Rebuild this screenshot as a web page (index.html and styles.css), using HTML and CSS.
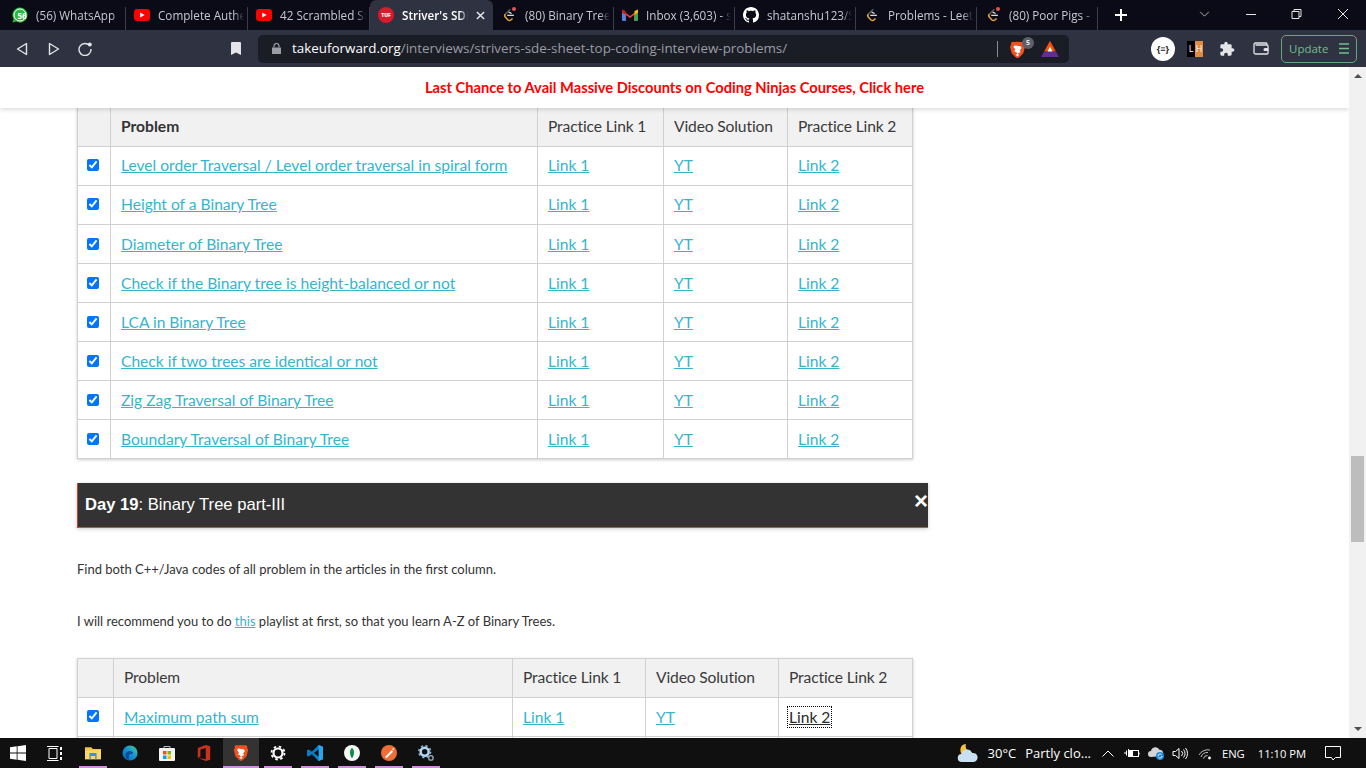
FILE: index.html
```html
<!DOCTYPE html>
<html lang="en">
<head>
<meta charset="utf-8">
<title>Striver's SDE Sheet</title>
<link rel="stylesheet" href="styles.css">
</head>
<body>
<svg class="defs" width="0" height="0" aria-hidden="true">
  <symbol id="yt" viewBox="0 0 16 12"><rect width="16" height="12" rx="3" fill="#f00"/><path d="M6.2 3.4 10.6 6l-4.4 2.6z" fill="#fff"/></symbol>
  <symbol id="lc" viewBox="0 0 18 18">
    <path d="M10.500 2.500 5 8" fill="none" stroke="#5a5a5a" stroke-width="1.700"/>
    <path d="M5 8a2.600 2.600 0 0 0 0 3.600l2.600 2.800a2.800 2.800 0 0 0 3.800 0l1.600-1.500" fill="none" stroke="#e8a33a" stroke-width="1.700"/>
    <path d="M7 9.400h7.500" stroke="#d8d8d8" stroke-width="1.500"/>
    <path d="M8.500 5.800l3.500 1.500" stroke="#e6e6e6" stroke-width="1.300"/>
  </symbol>
  <symbol id="dot" viewBox="0 0 4 4"><circle cx="2" cy="2" r="2" fill="#e5534b"/></symbol>
  <symbol id="brave" viewBox="0 0 18 20">
    <path d="M9 0 5 .5 3 0 1 2l.5 1.500L0 6l2 8 5 5 2 1 2-1 5-5 2-8-1.500-2.500L17 2l-2-2-2 .5z" fill="#f1511f"/>
    <path d="M9 5 5.500 4.500 4 6.500l2.500 3-1.500 2 3 1.500L9 15l1-1 3-1.500-1.500-2 2.500-3-1.500-2z" fill="#fff"/>
    <path d="M9 14.500 6.800 15.800 9 17.500l2.200-1.700z" fill="#fff"/>
  </symbol>
</svg>

<header class="tabstrip">
  <div class="tab first">
    <svg class="fav" viewBox="0 0 16 16"><path d="M8 .5a7.500 7.500 0 0 0-6.400 11.400L.5 15.500l3.700-1A7.500 7.500 0 1 0 8 .5z" fill="#2bb741"/><circle cx="8" cy="8" r="6" fill="#2bb741" stroke="#fff" stroke-width="1"/></svg>
    <span class="favcount">56</span>
    <span class="tabtitle">(56) WhatsApp</span>
  </div>
  <div class="tab"><svg class="fav yt"><use href="#yt"/></svg><span class="tabtitle">Complete Authentication</span></div>
  <div class="tab"><svg class="fav yt"><use href="#yt"/></svg><span class="tabtitle">42 Scrambled String</span></div>
  <div class="tab active">
    <span class="tuf">TUF</span>
    <span class="tabtitle">Striver's SDE Sheet</span>
    <svg class="tabclose" viewBox="0 0 10 10"><path d="M1 1l8 8M9 1 1 9" stroke="#e8e8ea" stroke-width="1.600"/></svg>
  </div>
  <div class="tab notched"><svg class="fav"><use href="#lc"/></svg><svg class="notedot"><use href="#dot"/></svg><span class="tabtitle">(80) Binary Tree Level</span></div>
  <div class="tab">
    <svg class="fav" viewBox="0 0 16 12"><path d="M1 12V2l7 5 7-5v10h-3V6L8 9 4 6v6z" fill="#ea4335"/><path d="M0 2.500V11a1 1 0 0 0 1 1h2.500V5.500z" fill="#4285f4"/><path d="M16 2.500V11a1 1 0 0 1-1 1h-2.500V5.500z" fill="#34a853"/><path d="M12.500 2 16 .5v3l-3.500 2.500z" fill="#fbbc04"/><path d="M0 .5v3L3.500 6V2z" fill="#c5221f"/></svg>
    <span class="tabtitle">Inbox (3,603) - shatanshu</span>
  </div>
  <div class="tab"><svg class="fav" viewBox="0 0 16 16"><path fill="#fff" d="M8 0C3.580 0 0 3.580 0 8c0 3.540 2.290 6.530 5.470 7.590.4.070.55-.17.55-.38 0-.19-.01-.82-.01-1.490-2.010.37-2.530-.49-2.690-.94-.09-.23-.48-.94-.82-1.130-.28-.15-.68-.52-.01-.53.63-.01 1.080.58 1.230.82.72 1.210 1.870.87 2.330.66.070-.52.28-.87.51-1.070-1.780-.2-3.640-.89-3.640-3.950 0-.87.31-1.590.82-2.150-.08-.2-.36-1.020.08-2.120 0 0 .67-.21 2.200.82.64-.18 1.320-.27 2-.27.68 0 1.360.09 2 .27 1.530-1.040 2.200-.82 2.200-.82.44 1.100.16 1.920.08 2.120.51.56.82 1.270.82 2.150 0 3.070-1.870 3.750-3.650 3.950.29.25.54.73.54 1.480 0 1.070-.01 1.930-.01 2.200 0 .21.15.46.55.38A8.013 8.013 0 0 0 16 8c0-4.420-3.580-8-8-8z"/></svg><span class="tabtitle">shatanshu123/Striver-SDE</span></div>
  <div class="tab"><svg class="fav"><use href="#lc"/></svg><span class="tabtitle">Problems - LeetCode</span></div>
  <div class="tab"><svg class="fav"><use href="#lc"/></svg><svg class="notedot"><use href="#dot"/></svg><span class="tabtitle">(80) Poor Pigs - LeetCode</span></div>
  <svg class="newtab" viewBox="0 0 12 12"><path d="M6 0v12M0 6h12" stroke="#fff" stroke-width="2"/></svg>
  <div class="wincontrols">
    <svg class="wc chev" viewBox="0 0 12 7"><path d="M1 1l5 5 5-5" fill="none" stroke="#c8c8cc" stroke-width="1"/></svg>
    <svg class="wc min" viewBox="0 0 10 1"><path d="M0 .5h10" stroke="#e6e6e6" stroke-width="1"/></svg>
    <svg class="wc max" viewBox="0 0 10 10"><path d="M.5 2.500h7v7h-7zM2.500 2.500v-2h7v7h-2" fill="none" stroke="#e6e6e6" stroke-width="1"/></svg>
    <svg class="wc cls" viewBox="0 0 10 10"><path d="M0 0l10 10M10 0 0 10" stroke="#e6e6e6" stroke-width="1"/></svg>
  </div>
</header>

<nav class="toolbar">
  <svg class="tool back" viewBox="0 0 12 14"><path d="M10.500 1.500v11L1.500 7z" fill="none" stroke="#e4e5e8" stroke-width="1.400" stroke-linejoin="round"/></svg>
  <svg class="tool fwd" viewBox="0 0 12 14"><path d="M1.500 1.500v11l9-5.500z" fill="none" stroke="#e4e5e8" stroke-width="1.400" stroke-linejoin="round"/></svg>
  <svg class="tool reload" viewBox="0 0 14 14"><path d="M11.500 3.500A6 6 0 1 0 13 7" fill="none" stroke="#e4e5e8" stroke-width="1.400"/><circle cx="11.800" cy="2.400" r="2" fill="#e4e5e8"/></svg>
  <svg class="tool bookmark" viewBox="0 0 10 13"><path d="M0 1a1 1 0 0 1 1-1h8a1 1 0 0 1 1 1v12L5 10.500 0 13z" fill="#e4e5e8"/></svg>
  <div class="urlbar">
    <svg class="lock" viewBox="0 0 9 11"><path d="M0 4.500h9V11H0z" fill="#9b9da5"/><path d="M2 4.500V3a2.500 2.500 0 0 1 5 0v1.500" fill="none" stroke="#9b9da5" stroke-width="1.200"/></svg>
    <span class="url"><span class="host">takeuforward.org</span>/interviews/strivers-sde-sheet-top-coding-interview-problems/</span>
    <span class="urlsep"></span>
    <span class="shield"><svg class="braveicon"><use href="#brave"/></svg><span class="shieldbadge">5</span></span>
    <svg class="bat" viewBox="0 0 18 16"><path d="M9 0l9 16H0z" fill="#662d91"/><path d="M9 0l5.500 10h-11z" fill="#ff5000"/><path d="M9 5.500l2.500 5h-5z" fill="#fff"/></svg>
  </div>
  <span class="ext-json">{≡}</span>
  <span class="ext-lh"><span class="lh-l">L</span><span class="lh-h">H</span></span>
  <svg class="puzzle" viewBox="0 0 24 24"><path fill="#e4e5e8" d="M20.500 11H19V7c0-1.100-.9-2-2-2h-4V3.500C13 2.120 11.880 1 10.500 1S8 2.120 8 3.500V5H4c-1.100 0-1.990.9-1.990 2v3.800H3.500c1.490 0 2.700 1.210 2.700 2.700s-1.210 2.700-2.700 2.700H2V20c0 1.100.9 2 2 2h3.800v-1.500c0-1.490 1.210-2.700 2.700-2.700 1.490 0 2.700 1.210 2.700 2.700V22H17c1.100 0 2-.9 2-2v-4h1.500c1.380 0 2.500-1.120 2.500-2.500S21.880 11 20.500 11z"/></svg>
  <svg class="wallet" viewBox="0 0 16 13"><path d="M14 3V2a1 1 0 0 0-1-1H2.500A1.500 1.500 0 0 0 1 2.500V10.500A1.500 1.500 0 0 0 2.500 12H14a1 1 0 0 0 1-1V4a1 1 0 0 0-1-1H2.500" fill="none" stroke="#e4e5e8" stroke-width="1.300"/><rect x="10.500" y="6" width="5" height="3" rx="1.500" fill="#e4e5e8"/></svg>
  <div class="update"><span>Update</span><svg class="menu" viewBox="0 0 10 11"><path d="M0 1h10M0 5.500h10M0 10h10" stroke="#6fbf8f" stroke-width="1.400"/></svg></div>
</nav>

<div class="viewport">
  <main class="page">
    <div class="banner">Last Chance to Avail Massive Discounts on Coding Ninjas Courses, Click here</div>
    <div class="content">
      <table class="sheet sheet-a">
        <thead>
          <tr><th class="c1"></th><th class="c2 strong">Problem</th><th class="c3">Practice Link 1</th><th class="c4">Video Solution</th><th class="c5">Practice Link 2</th></tr>
        </thead>
        <tbody>
          <tr><td><input type="checkbox" checked></td><td><a href="#">Level order Traversal / Level order traversal in spiral form</a></td><td><a href="#">Link 1</a></td><td><a href="#">YT</a></td><td><a href="#">Link 2</a></td></tr>
          <tr><td><input type="checkbox" checked></td><td><a href="#">Height of a Binary Tree</a></td><td><a href="#">Link 1</a></td><td><a href="#">YT</a></td><td><a href="#">Link 2</a></td></tr>
          <tr><td><input type="checkbox" checked></td><td><a href="#">Diameter of Binary Tree</a></td><td><a href="#">Link 1</a></td><td><a href="#">YT</a></td><td><a href="#">Link 2</a></td></tr>
          <tr><td><input type="checkbox" checked></td><td><a href="#">Check if the Binary tree is height-balanced or not</a></td><td><a href="#">Link 1</a></td><td><a href="#">YT</a></td><td><a href="#">Link 2</a></td></tr>
          <tr><td><input type="checkbox" checked></td><td><a href="#">LCA in Binary Tree</a></td><td><a href="#">Link 1</a></td><td><a href="#">YT</a></td><td><a href="#">Link 2</a></td></tr>
          <tr><td><input type="checkbox" checked></td><td><a href="#">Check if two trees are identical or not</a></td><td><a href="#">Link 1</a></td><td><a href="#">YT</a></td><td><a href="#">Link 2</a></td></tr>
          <tr><td><input type="checkbox" checked></td><td><a href="#">Zig Zag Traversal of Binary Tree</a></td><td><a href="#">Link 1</a></td><td><a href="#">YT</a></td><td><a href="#">Link 2</a></td></tr>
          <tr><td><input type="checkbox" checked></td><td><a href="#">Boundary Traversal of Binary Tree</a></td><td><a href="#">Link 1</a></td><td><a href="#">YT</a></td><td><a href="#">Link 2</a></td></tr>
        </tbody>
      </table>

      <div class="daybar"><span><b>Day 19</b>: Binary Tree part-III</span><span class="dayclose">×</span></div>

      <p class="note first-note">Find both C++/Java codes of all problem in the articles in the first column.</p>
      <p class="note">I will recommend you to do <a href="#">this</a> playlist at first, so that you learn A-Z of Binary Trees.</p>

      <table class="sheet sheet-b">
        <thead>
          <tr><th class="d1"></th><th class="d2">Problem</th><th class="d3">Practice Link 1</th><th class="d4">Video Solution</th><th class="d5">Practice Link 2</th></tr>
        </thead>
        <tbody>
          <tr><td><input type="checkbox" checked></td><td><a href="#">Maximum path sum</a></td><td><a href="#">Link 1</a></td><td><a href="#">YT</a></td><td><a href="#" class="focused">Link 2</a></td></tr>
          <tr><td></td><td></td><td></td><td></td><td></td></tr>
        </tbody>
      </table>
    </div>
  </main>
  <aside class="scrollbar">
    <span class="arrow up"></span>
    <span class="thumb"></span>
    <span class="arrow down"></span>
  </aside>
</div>

<footer class="taskbar">
  <svg class="win" viewBox="0 0 16 16"><path d="M0 2.300 6.700 1.300v6.300H0zM7.500 1.200 16 0v7.600H7.500zM0 8.400h6.700v6.300L0 13.700zM7.500 8.400H16V16l-8.500-1.200z" fill="#fff"/></svg>
  <svg class="taskview" viewBox="0 0 17 15"><path d="M3 2.500h8v10H3zM1 .5h11.500M1 14.500h11.500" fill="none" stroke="#fff" stroke-width="1"/><path d="M14 1h2v3h-2zM14 6h2v3h-2zM14 11h2v3h-2z" fill="#fff"/></svg>
  <div class="app running"><svg viewBox="0 0 18 16"><path d="M0 1.500h7l2 2h9V15H0z" fill="#f6c344"/><path d="M0 5h18v10H0z" fill="#fbd668"/><path d="M5 8h8v7h-1.500v-3.500h-5V15H5z" fill="#3a93d6"/></svg></div>
  <div class="app"><svg viewBox="0 0 18 18"><defs><linearGradient id="eg" x1="1" y1="0" x2="0" y2="1"><stop offset="0" stop-color="#45d48a"/><stop offset=".5" stop-color="#1490d8"/><stop offset="1" stop-color="#0b62b4"/></linearGradient></defs><circle cx="9" cy="9" r="8.500" fill="url(#eg)"/><path d="M8 17c-4-1-5-5-3.500-8 1.500-2.500 5-3 7-1.500 1.500 1 1 2.500-.5 2.500-3-.5-4 3-3 7z" fill="#0a4f97"/></svg></div>
  <div class="app"><svg viewBox="0 0 16 16"><rect y="3" width="16" height="13" rx="1" fill="#f4f4f4"/><path d="M5 3V1.500h6V3" fill="none" stroke="#bbb"/><rect x="4" y="6" width="3.500" height="3.500" fill="#f25022"/><rect x="8.500" y="6" width="3.500" height="3.500" fill="#7fba00"/><rect x="4" y="10.500" width="3.500" height="3.500" fill="#00a4ef"/><rect x="8.500" y="10.500" width="3.500" height="3.500" fill="#ffb900"/></svg></div>
  <div class="app"><svg viewBox="0 0 14 18"><path d="M0 3.500 9 0l5 1.500v15L9 18 0 14.500l9 1.500V3.500L3 5v8l-3 1.500z" fill="#c8311c"/></svg></div>
  <div class="app active running"><svg><use href="#brave"/></svg></div>
  <div class="app running"><svg viewBox="0 0 16 16"><circle cx="8" cy="8" r="4.500" fill="none" stroke="#fff" stroke-width="2.200"/><circle cx="8" cy="8" r="6.500" fill="none" stroke="#fff" stroke-width="1.800" stroke-dasharray="2.500 2.600"/></svg></div>
  <div class="app running"><svg viewBox="0 0 18 18"><path d="M13 0 5.500 7.500 2 5 0 6v6l2 1 3.500-2.500L13 18l5-2V2z" fill="#0a7cc4"/><path d="M13 0l5 2v14l-5 2z" fill="#2aa5ea"/><path d="M13 5 7.700 9l5.300 4z" fill="#101010"/></svg></div>
  <div class="app running"><svg viewBox="0 0 18 18"><circle cx="9" cy="9" r="9" fill="#f5f7f5"/><path d="M9 3c3 2.500 3 8 0 12-3-4-3-9.500 0-12z" fill="#0d8a4a"/></svg></div>
  <div class="app running"><svg viewBox="0 0 18 18"><circle cx="9" cy="9" r="9" fill="#ef6c35"/><path d="M4.500 13.500 12 6l1.500 1.500-7 7zM12.500 5 14 3.500l1 1L13.500 6z" fill="#fff"/></svg></div>
  <div class="app running"><svg viewBox="0 0 18 18"><circle cx="7.500" cy="7.500" r="4.500" fill="none" stroke="#b6d6ef" stroke-width="2.800"/><circle cx="7.500" cy="7.500" r="6.600" fill="none" stroke="#8fbce0" stroke-width="1.800" stroke-dasharray="2.500 2.700"/><circle cx="14.500" cy="14.500" r="2.500" fill="none" stroke="#9ab" stroke-width="1.500"/></svg></div>

  <div class="tray">
    <svg class="weather" viewBox="0 0 22 20"><path d="M9 1a6 6 0 0 0 6 8 6 6 0 1 1-6-8z" fill="#f7c23e"/><path d="M5 19a4 4 0 0 1-.5-8 5.500 5.500 0 0 1 10.500-1 4.500 4.500 0 0 1 2 9z" fill="#c9dff2"/></svg>
    <span class="temp">30°C</span>
    <span class="cond">Partly clo...</span>
    <svg class="ti chevup" viewBox="0 0 12 7"><path d="M.5 6.500 6 1l5.500 5.500" fill="none" stroke="#fff" stroke-width="1"/></svg>
    <svg class="ti batt" viewBox="0 0 16 10"><rect x="5.500" y="2.500" width="9" height="6" fill="none" stroke="#fff"/><path d="M15 4.500v2" stroke="#fff"/><path d="M0 5h3M4.500 1v8M2.500 2.500v5" stroke="#fff"/><path d="M6 3h3v5H6z" fill="#fff"/></svg>
    <svg class="ti cloud" viewBox="0 0 17 14"><path d="M3 11a3 3 0 0 1 0-6 4.500 4.500 0 0 1 8.500-1.200A3.500 3.500 0 0 1 14 10z" fill="#d2d4d8"/><circle cx="12" cy="10" r="4" fill="#1a86d8"/><path d="M10 10a2 2 0 0 1 3.500-1.300M14 10a2 2 0 0 1-3.500 1.300" stroke="#fff" fill="none"/></svg>
    <svg class="ti vol" viewBox="0 0 16 13"><path d="M1 4.500h2.500L7 1.500v10L3.500 8.500H1z" fill="none" stroke="#fff"/><path d="M9.500 4a3.500 3.500 0 0 1 0 5M11.500 2.500a6 6 0 0 1 0 8M13.500 1a8.500 8.500 0 0 1 0 11" fill="none" stroke="#fff"/></svg>
    <svg class="ti wifi" viewBox="0 0 14 13"><path d="M1 8a10 10 0 0 1 11-5M3 10a7 7 0 0 1 7-4.500M5.500 11.500a4 4 0 0 1 4-3" fill="none" stroke="#bdbdbd"/><circle cx="11.500" cy="11" r="1.400" fill="#fff"/></svg>
    <span class="lang">ENG</span>
    <span class="clock">11:10 PM</span>
    <svg class="ti notif" viewBox="0 0 16 15"><path d="M.5.500h15V11.500h-5L8 14 6.500 11.500h-6z" fill="none" stroke="#fff"/></svg>
  </div>
</footer>
</body>
</html>
```

FILE: styles.css
```css
* { box-sizing: border-box; }
html, body { margin: 0; height: 100%; overflow: hidden; }
body {
  display: flex;
  flex-direction: column;
  width: 1366px;
  height: 768px;
  font-family: "Open Sans", "Liberation Sans", sans-serif;
}
.defs { position: absolute; }

/* tab strip */
.tabstrip {
  height: 30px;
  flex: none;
  display: flex;
  align-items: center;
  padding-left: 4px;
  background: #0b0b17;
  color: #c6c8d0;
  font-size: 11.700px;
}
.tab {
  position: relative;
  width: 122px;
  height: 30px;
  flex: none;
  display: flex;
  align-items: center;
  gap: 8px;
  padding: 0 4px 0 8px;
  overflow: hidden;
}
.tab::after {
  content: "";
  position: absolute;
  right: 0;
  top: 7px;
  height: 23px;
  width: 1px;
  background: #3b3d49;
}
.tab.active {
  background: #2f3241;
  border-radius: 6px 6px 0 0;
  color: #fff;
  font-weight: 600;
  width: 123px;
  padding-right: 8px;
}
.tab.active ~ .tab { width: 121px; }
.tab.active::after { display: none; }
.fav { width: 16px; height: 16px; flex: none; }
.fav.yt { height: 12px; }
.favcount {
  position: absolute;
  left: 11px;
  top: 10px;
  width: 14px;
  text-align: center;
  font-size: 8px;
  font-weight: 700;
  color: #fff;
}
.tabtitle {
  flex: 1;
  min-width: 0;
  white-space: nowrap;
  overflow: hidden;
  -webkit-mask-image: linear-gradient(90deg, #000 88%, transparent);
  mask-image: linear-gradient(90deg, #000 88%, transparent);
}
.tuf {
  flex: none;
  width: 16px;
  height: 16px;
  border-radius: 50%;
  background: #d9192c;
  color: #fff;
  font-size: 5px;
  font-weight: 800;
  line-height: 16px;
  text-align: center;
}
.tabclose { width: 9px; height: 9px; flex: none; }
.notedot { position: absolute; left: 19px; top: 7px; width: 4px; height: 4px; }
.newtab { width: 12px; height: 12px; margin-left: 17px; flex: none; }
.wincontrols { margin-left: auto; display: flex; align-items: center; padding-bottom: 2px; }
.wc { flex: none; }
.chev { width: 11px; height: 6px; margin-right: 36px; }
.min { width: 10px; height: 1px; margin-right: 35px; }
.max { width: 11px; height: 10px; margin-right: 36px; }
.cls { width: 10px; height: 10px; margin-right: 18px; }

/* toolbar */
.toolbar {
  height: 37px;
  flex: none;
  display: flex;
  align-items: center;
  background: #2f3241;
}
.tool { flex: none; }
.back { width: 12px; height: 14px; margin-left: 16px; }
.fwd { width: 12px; height: 14px; margin-left: 20px; }
.reload { width: 14px; height: 14px; margin-left: 18px; }
.bookmark { width: 10px; height: 13px; margin-left: 139px; }
.urlbar {
  width: 811px;
  height: 28px;
  margin-left: 17px;
  flex: none;
  display: flex;
  align-items: center;
  background: #1a1c26;
  border-radius: 5px;
  padding-left: 14px;
}
.lock { width: 9px; height: 11px; flex: none; }
.url {
  margin-left: 11px;
  padding-bottom: 1px;
  width: 705px;
  flex: none;
  font-size: 13.400px;
  color: #9a9ca3;
  white-space: nowrap;
}
.host { color: #fff; }
.urlsep { width: 1px; height: 16px; background: #8a8c94; flex: none; }
.shield { position: relative; width: 18px; height: 20px; margin-left: 12px; flex: none; }
.braveicon { width: 15px; height: 18px; display: block; margin-top: 2px; }
.shieldbadge {
  position: absolute;
  left: 12px;
  top: -2px;
  width: 12px;
  height: 12px;
  border-radius: 50%;
  background: #5d5f6c;
  color: #e6e6e6;
  font-size: 7px;
  font-weight: 700;
  line-height: 12px;
  text-align: center;
}
.bat { width: 18px; height: 16px; margin-left: 13px; flex: none; }
.ext-json {
  width: 24px;
  height: 24px;
  margin-left: 82px;
  flex: none;
  border-radius: 50%;
  background: #fff;
  color: #222;
  font-size: 9px;
  font-weight: 700;
  line-height: 24px;
  text-align: center;
}
.ext-lh {
  width: 16px;
  height: 16px;
  margin-left: 12px;
  flex: none;
  display: flex;
  font-size: 9px;
  line-height: 16px;
  text-align: center;
}
.lh-l { flex: 1; background: #000; color: #fff; }
.lh-h { flex: 1; background: #e08a3f; color: #fff; }
.puzzle { width: 16px; height: 16px; margin-left: 16px; flex: none; }
.wallet { width: 16px; height: 13px; margin-left: 18px; flex: none; }
.update {
  width: 76px;
  height: 28px;
  margin-left: 12px;
  flex: none;
  display: flex;
  align-items: center;
  justify-content: space-between;
  padding: 0 7px 0 7px;
  border: 1px solid #5fa97d;
  border-radius: 5px;
  color: #6fbf8f;
  font-size: 11.500px;
}
.menu { width: 10px; height: 11px; flex: none; }

/* page */
.viewport {
  height: 671px;
  flex: none;
  display: flex;
  overflow: hidden;
  background: #fff;
}
.page { flex: 1; min-width: 0; overflow: hidden; }
.banner {
  position: relative;
  z-index: 1;
  height: 41px;
  background: #fff;
  box-shadow: 0 1px 5px rgba(0, 0, 0, .18);
  color: #f00;
  font-family: Lato, "Liberation Sans", sans-serif;
  font-size: 14.700px;
  font-weight: 700;
  line-height: 40px;
  text-align: center;
}
.content {
  width: 851px;
  margin-left: 77px;
  margin-top: -1px;
  color: #333;
  font-family: Lato, "Liberation Sans", sans-serif;
}
.sheet {
  width: 835px;
  table-layout: fixed;
  border-collapse: collapse;
  font-size: 15.600px;
  box-shadow: 0 1px 3px rgba(0, 0, 0, .2);
}
.sheet th, .sheet td {
  height: 39px;
  padding: 0 10px 2px;
  border: 1px solid #d0d0d0;
  text-align: left;
  white-space: nowrap;
}
.sheet th { background: #f1f1f1; color: #3a3a3a; font-weight: 400; letter-spacing: -.13px; }
.sheet th.strong { font-weight: 700; color: #333; letter-spacing: 0; }
.sheet td:first-child { padding: 0 0 2px; }
.sheet-a tr:nth-child(n+3) td, .sheet-b td { padding-bottom: 0; }
.sheet input { display: block; width: 12px; height: 12px; margin: 0 0 0 9px; }
.sheet a, .note a { color: #36b5cd; text-decoration: underline; }
.sheet a.focused { color: #2a2a2a; outline: 1px dotted #000; outline-offset: 1px; }
.c1 { width: 33px; }
.c2 { width: 427px; }
.c3 { width: 126px; }
.c4 { width: 124px; }
.c5 { width: 125px; }
.d1 { width: 36px; }
.d2 { width: 399px; }
.d3 { width: 133px; }
.d4 { width: 133px; }
.d5 { width: 134px; }
.daybar {
  height: 45px;
  margin-top: 24px;
  display: flex;
  align-items: center;
  justify-content: space-between;
  padding: 0 0 0 7px;
  background: #333;
  border-left: 1px solid #c0472e;
  border-bottom: 1px solid #d94f32;
  color: #fff;
  font-family: "Liberation Sans", Arial, sans-serif;
  font-size: 16.600px;
  box-shadow: 0 1px 4px rgba(0, 0, 0, .2);
}
.dayclose { font-size: 24px; font-weight: 700; line-height: 1; margin-top: -8px; }
.note { margin: 0; font-size: 13px; line-height: 20px; }
.first-note { margin-top: 31px; margin-bottom: 32px; }
.note + .note { margin-bottom: 27px; }

/* scrollbar */
.scrollbar {
  width: 17px;
  flex: none;
  display: flex;
  flex-direction: column;
  align-items: center;
  background: #f1f1f1;
}
.arrow { width: 0; height: 0; border-left: 4px solid transparent; border-right: 4px solid transparent; flex: none; }
.arrow.up { margin-top: 7px; border-bottom: 4px solid #505050; }
.arrow.down { margin-top: auto; margin-bottom: 7px; border-top: 4px solid #505050; }
.thumb { width: 13px; height: 86px; margin-top: 378px; background: #bdbdbd; flex: none; }

/* taskbar */
.taskbar {
  height: 30px;
  flex: none;
  display: flex;
  align-items: center;
  background: #101010;
  color: #fff;
  font-family: "Open Sans", "Liberation Sans", sans-serif;
  font-size: 12px;
}
.win { width: 16px; height: 16px; margin-left: 10px; flex: none; }
.taskview { width: 17px; height: 15px; margin-left: 20px; flex: none; }
.app {
  position: relative;
  width: 36px;
  height: 30px;
  margin-left: 1px;
  flex: none;
  display: flex;
  align-items: center;
  justify-content: center;
}
.taskview + .app { margin-left: 12px; }
.app svg { width: 16px; height: 16px; }
.app.active { background: #333; }
.app.running::after {
  content: "";
  position: absolute;
  left: 4px;
  right: 4px;
  bottom: 0;
  height: 2px;
  background: #d48ee0;
}
.app.active::after { left: 0; right: 0; }
.tray { margin-left: auto; display: flex; align-items: center; height: 30px; }
.weather { width: 22px; height: 20px; flex: none; }
.temp { margin-left: 9px; font-size: 13px; }
.cond { margin-left: 9px; font-size: 13px; }
.ti { flex: none; }
.chevup { width: 12px; height: 7px; margin-left: 11px; }
.batt { width: 16px; height: 10px; margin-left: 10px; }
.cloud { width: 17px; height: 14px; margin-left: 8px; }
.vol { width: 16px; height: 13px; margin-left: 7px; }
.wifi { width: 14px; height: 13px; margin-left: 10px; }
.lang { margin-left: 10px; font-size: 11.200px; }
.clock { margin-left: 13px; font-size: 11.200px; }
.notif { width: 16px; height: 15px; margin-left: 19px; margin-right: 25px; }
```
